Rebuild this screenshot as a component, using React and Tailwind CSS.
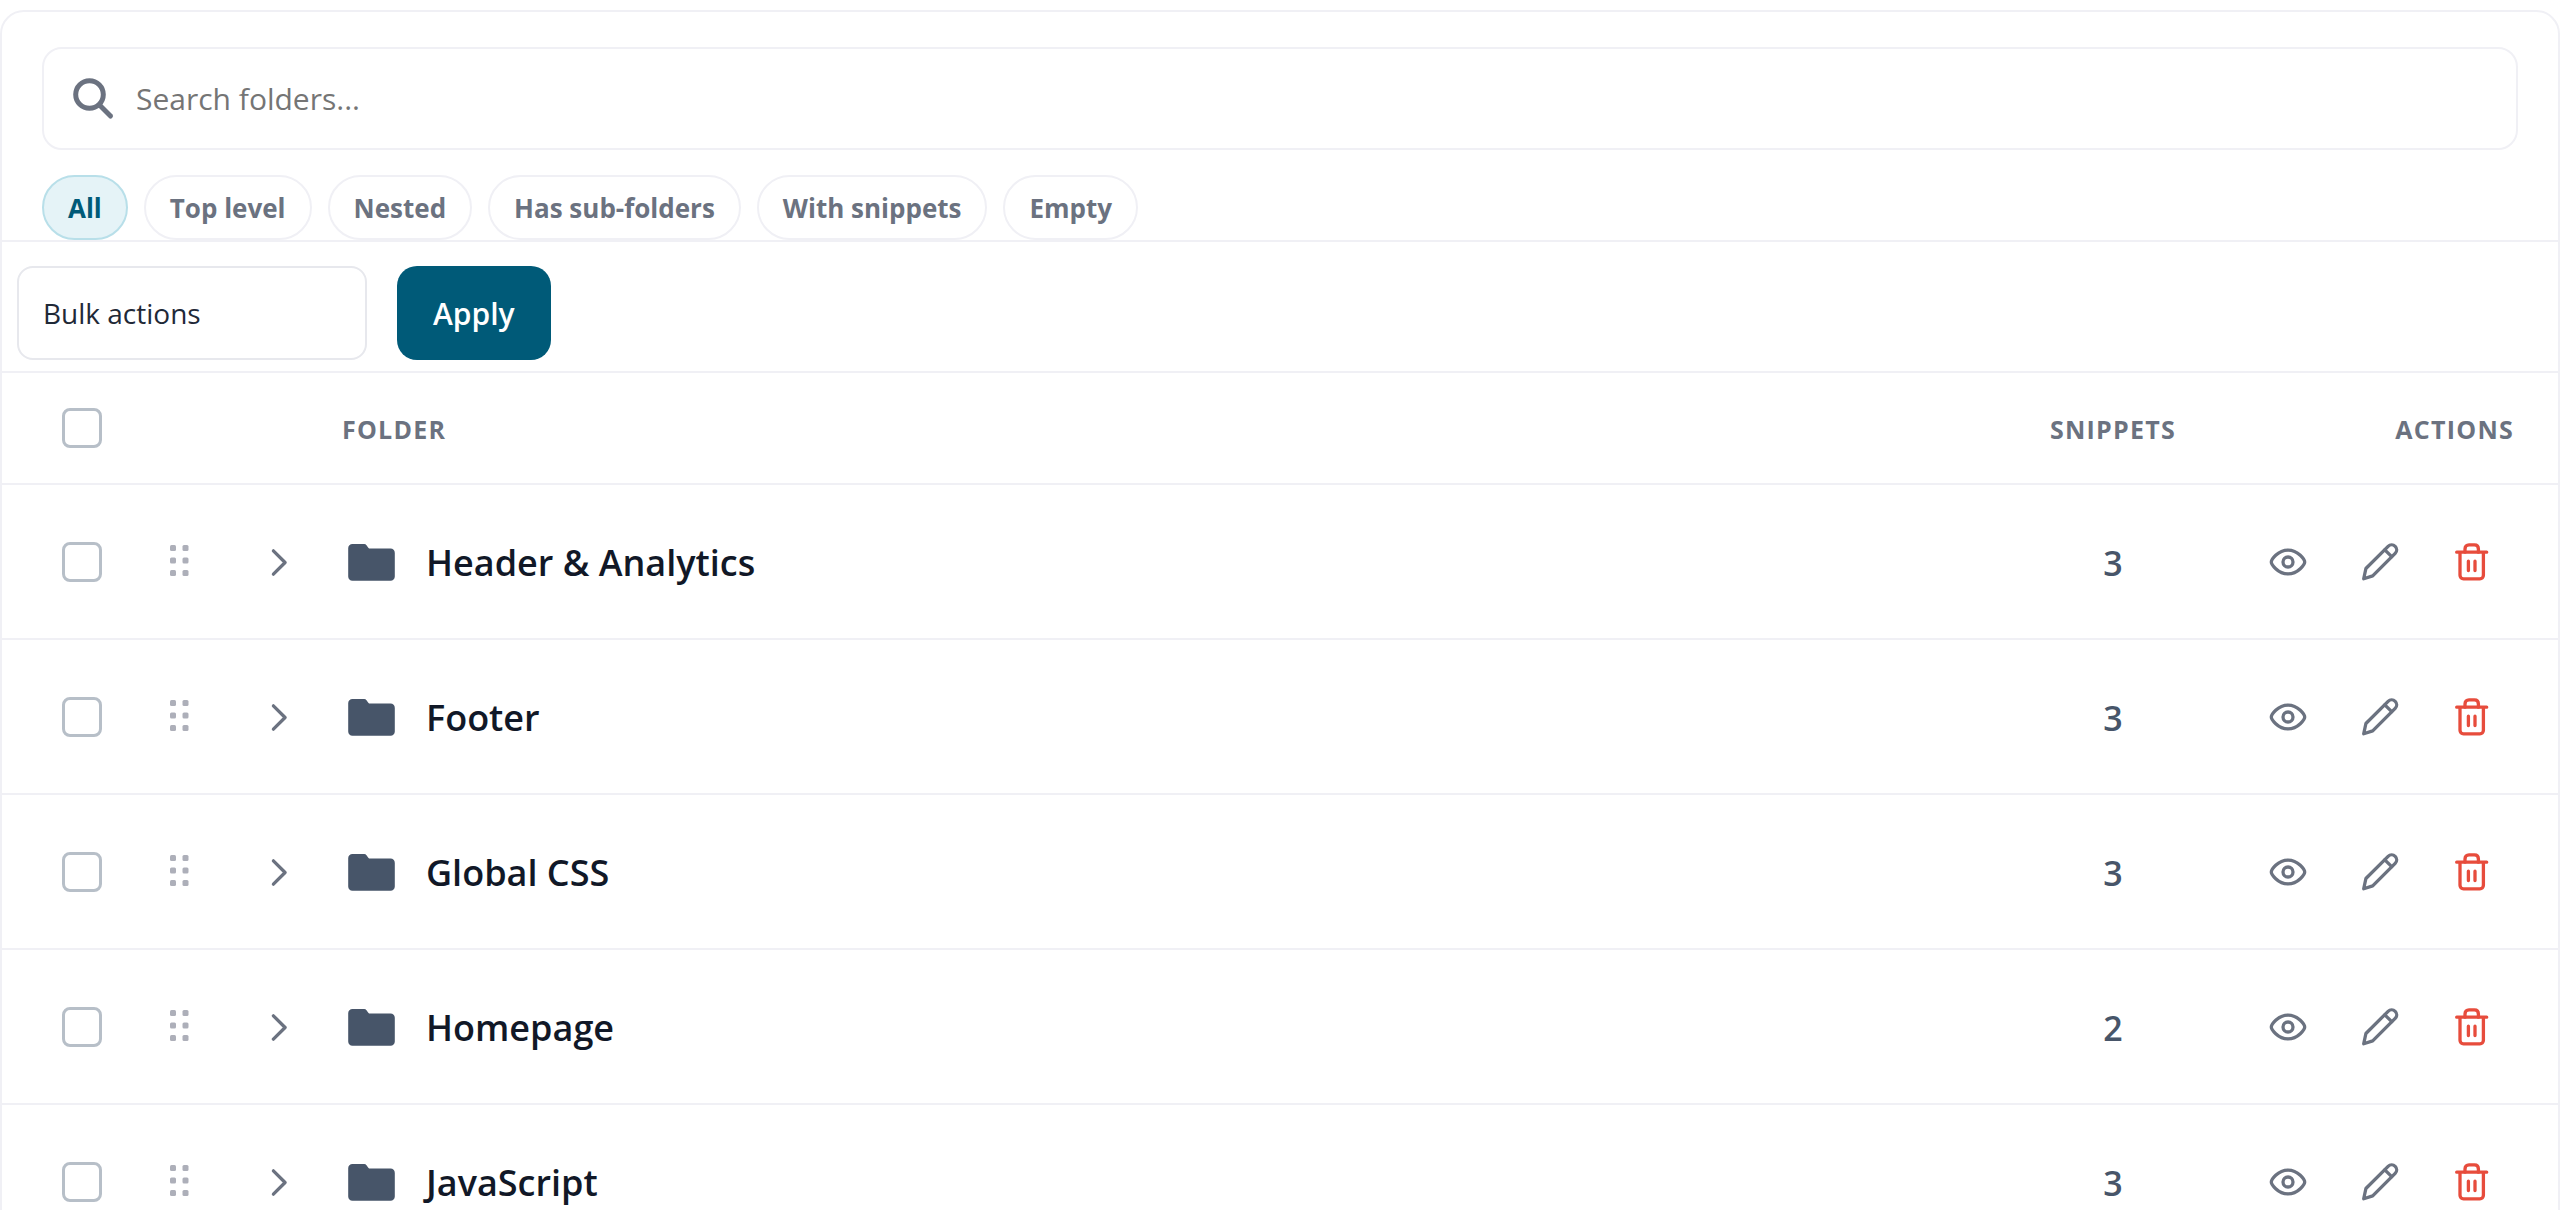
import React, { useState } from "react";

const filters = ["All", "Top level", "Nested", "Has sub-folders", "With snippets", "Empty"];

const folders = [
  { id: 1, name: "Header & Analytics", snippets: 3 },
  { id: 2, name: "Footer", snippets: 3 },
  { id: 3, name: "Global CSS", snippets: 3 },
  { id: 4, name: "Homepage", snippets: 2 },
  { id: 5, name: "JavaScript", snippets: 3 },
];

const stroke = {
  fill: "none",
  stroke: "currentColor",
  strokeWidth: 3.3,
  strokeLinecap: "round",
  strokeLinejoin: "round",
};

function SearchIcon() {
  return (
    <svg className="size-12 shrink-0 text-[#6b7280]" viewBox="0 0 48 48" {...stroke} strokeWidth="5">
      <circle cx="21.5" cy="19.5" r="13.8" />
      <path d="M31.5 30 42.5 41" />
    </svg>
  );
}

function DragIcon() {
  return (
    <svg className="mx-auto size-10 text-[#adafb9]" viewBox="0 0 40 40" fill="currentColor">
      {[6, 18.5, 31].map((y) => (
        <React.Fragment key={y}>
          <rect x="10" y={y - 3} width="6" height="6" rx="1.5" />
          <rect x="22.5" y={y - 3} width="6" height="6" rx="1.5" />
        </React.Fragment>
      ))}
    </svg>
  );
}

function ChevronIcon() {
  return (
    <svg className="mx-auto size-10" viewBox="0 0 40 40" {...stroke}>
      <path d="m13.4 8.8 11.7 11.7-11.7 11.7" />
    </svg>
  );
}

function FolderIcon() {
  return (
    <svg className="h-10 w-[60px] shrink-0 text-[#475569]" viewBox="0 0 60 40" fill="currentColor">
      <path d="M10.5 2H22.2c1 0 1.7.4 2.3 1.2l1.6 2.2c.6.8 1.2 1.2 2.2 1.2H48.5c2.500 0 4.300 1.800 4.300 4.300V34.500c0 2.500-1.800 4.300-4.300 4.300H10.500C8 38.800 6.200 37 6.200 34.500V6.300C6.200 3.800 8 2 10.500 2Z" />
    </svg>
  );
}

function EyeIcon() {
  return (
    <svg className="size-10" viewBox="0 0 40 40" {...stroke}>
      <path d="M3.3 20C3.3 18 9.5 8.1 20 8.1S36.7 18 36.7 20 30.5 31.9 20 31.9 3.3 22 3.3 20Z" />
      <circle cx="20" cy="20" r="5" />
    </svg>
  );
}

function PencilIcon() {
  return (
    <svg className="size-10" viewBox="0 0 40 40" {...stroke}>
      <path d="M28.1 4.3a5 5 0 0 1 7.1 7.1L12.7 33.9 3.7 36.8 5.9 26.5Z" />
      <path d="m24.8 7.8 6.9 6.9" />
    </svg>
  );
}

function TrashIcon() {
  return (
    <svg className="size-10" viewBox="0 0 40 40" {...stroke}>
      <path d="M4.7 10.2H34.7M8 10.2V33.3c0 2 1.5 3.5 3.5 3.5H27.9c2 0 3.5-1.5 3.5-3.5V10.2" />
      <path d="M13 10.2V6.9c0-2.4 1.6-4 4-4h5.4c2.4 0 4 1.6 4 4v3.3M16.4 19.2V28.5M23 19.2V28.5" />
    </svg>
  );
}

function Checkbox({ label, checked, onChange }) {
  return (
    <input
      type="checkbox"
      aria-label={label}
      checked={checked}
      onChange={onChange}
      className="block size-10 appearance-none rounded-lg border-3 border-[#b7bfc8] bg-white checked:bg-[#005a78]"
    />
  );
}

function FolderRow({ folder, checked, onToggle }) {
  return (
    <tr className="h-[155px] border-b-2 border-[#f0f0f5]">
      <td className="pl-[60px]">
        <Checkbox label={`Select ${folder.name}`} checked={checked} onChange={() => onToggle(folder.id)} />
      </td>
      <td>
        <DragIcon />
      </td>
      <td className="text-[#6b7280]">
        <button type="button" aria-label="Expand" className="block w-full">
          <ChevronIcon />
        </button>
      </td>
      <td className="pl-3">
        <div className="flex items-center gap-6">
          <FolderIcon />
          <span className="pt-0.5 text-[36px] leading-[48px] font-semibold text-[#111827]">{folder.name}</span>
        </div>
      </td>
      <td className="pt-1 text-center text-[34px] font-semibold text-[#475569]">{folder.snippets}</td>
      <td className="pr-10">
        <div className="flex justify-end text-[#6b7280]">
          <button type="button" aria-label="View" className="flex w-23 justify-center">
            <EyeIcon />
          </button>
          <button type="button" aria-label="Edit" className="flex w-23 justify-center">
            <PencilIcon />
          </button>
          <button type="button" aria-label="Delete" className="flex w-23 justify-center text-[#e74c3c]">
            <TrashIcon />
          </button>
        </div>
      </td>
    </tr>
  );
}

export default function App() {
  const [active, setActive] = useState("All");
  const [selected, setSelected] = useState([]);

  const toggle = (id) =>
    setSelected((ids) => (ids.includes(id) ? ids.filter((i) => i !== id) : [...ids, id]));

  const allSelected = selected.length === folders.length;

  return (
    <div className="h-screen overflow-hidden bg-white pt-2.5 font-['Open_Sans','Noto_Sans',sans-serif]">
      <div className="rounded-t-3xl border-2 border-[#f0f0f5]">
        <div className="border-b-2 border-[#f0f0f5] px-10 pt-[35px]">
          <label className="flex h-[103px] items-center gap-5 rounded-[20px] border-2 border-[#f0f0f5] px-6">
            <SearchIcon />
            <input
              type="text"
              aria-label="Search folders"
              placeholder="Search folders..."
              className="w-full text-[30px] outline-none placeholder:text-[#757575]"
            />
          </label>
          <div className="mt-[25px] flex gap-4">
            {filters.map((name) => (
              <button
                key={name}
                type="button"
                onClick={() => setActive(name)}
                className={`h-[65px] rounded-full border-2 px-6 pt-0.5 text-[26px] font-bold ${
                  active === name
                    ? "border-[#b8dfe9] bg-[#e5f3f7] text-[#005a78]"
                    : "border-[#f0f0f5] text-[#6b7280]"
                }`}
              >
                {name}
              </button>
            ))}
          </div>
        </div>

        <div className="flex gap-[30px] border-b-2 border-[#f0f0f5] px-[15px] pt-6 pb-[11px]">
          <select
            aria-label="Bulk actions"
            className="h-[94px] w-[350px] appearance-none rounded-2xl border-2 border-[#e7e8ed] px-6 text-[28px] text-[#1f2937]"
          >
            <option>Bulk actions</option>
            <option>Delete</option>
          </select>
          <button
            type="button"
            className="h-[94px] rounded-[20px] bg-[#005a78] px-9 text-[30px] font-semibold text-white"
          >
            Apply
          </button>
        </div>

        <table className="w-full table-fixed border-collapse">
          <colgroup>
            <col className="w-32" />
            <col className="w-25" />
            <col className="w-25" />
            <col />
            <col className="w-55" />
            <col className="w-[335px]" />
          </colgroup>
          <thead>
            <tr className="h-[111px] border-b-2 border-[#f0f0f5] text-[25px] font-bold tracking-wider text-[#6b7280] uppercase">
              <th className="pl-[60px]">
                <Checkbox
                  label="Select all"
                  checked={allSelected}
                  onChange={() => setSelected(allSelected ? [] : folders.map((f) => f.id))}
                />
              </th>
              <th></th>
              <th></th>
              <th className="pt-1 pl-3 text-left">Folder</th>
              <th className="pt-1 text-center">Snippets</th>
              <th className="pt-1 pr-11 text-right">Actions</th>
            </tr>
          </thead>
          <tbody>
            {folders.map((folder) => (
              <FolderRow
                key={folder.id}
                folder={folder}
                checked={selected.includes(folder.id)}
                onToggle={toggle}
              />
            ))}
          </tbody>
        </table>
      </div>
    </div>
  );
}
